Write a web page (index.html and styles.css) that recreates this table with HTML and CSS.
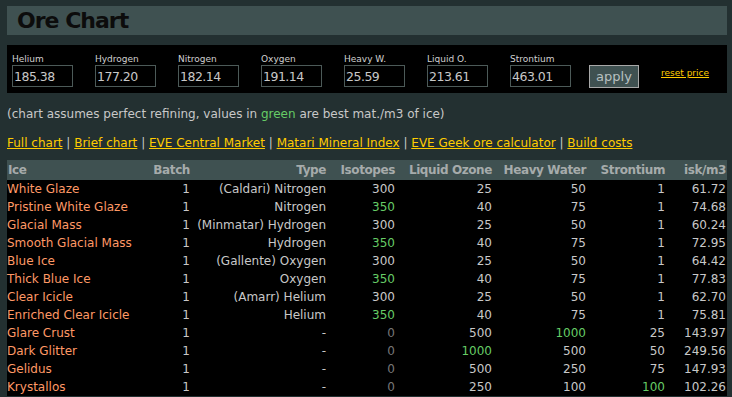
FILE: index.html
```html
<!DOCTYPE html>
<html>
<head>
<meta charset="utf-8">
<link rel="stylesheet" href="styles.css">
</head>
<body>
<div class="page">
  <h1 class="title">Ore Chart</h1>
  <form class="prices">
    <label class="field"><span class="lbl">Helium</span><input class="inp" value="185.38"></label>
    <label class="field"><span class="lbl">Hydrogen</span><input class="inp" value="177.20"></label>
    <label class="field"><span class="lbl">Nitrogen</span><input class="inp" value="182.14"></label>
    <label class="field"><span class="lbl">Oxygen</span><input class="inp" value="191.14"></label>
    <label class="field"><span class="lbl">Heavy W.</span><input class="inp" value="25.59"></label>
    <label class="field"><span class="lbl">Liquid O.</span><input class="inp" value="213.61"></label>
    <label class="field"><span class="lbl">Strontium</span><input class="inp" value="463.01"></label>
    <button type="button" class="apply">apply</button>
    <a class="reset" href="#">reset price</a>
  </form>
  <p class="note">(chart assumes perfect refining, values in <span class="g">green</span> are best mat./m3 of ice)</p>
  <p class="links"><a href="#">Full chart</a> | <a href="#">Brief chart</a> | <a href="#">EVE Central Market</a> | <a href="#">Matari Mineral Index</a> | <a href="#">EVE Geek ore calculator</a> | <a href="#">Build costs</a></p>
  <table class="chart">
    <colgroup>
      <col class="c-ice"><col class="c-batch"><col class="c-type"><col class="c-iso"><col class="c-lo"><col class="c-hw"><col class="c-sr"><col class="c-isk">
    </colgroup>
    <thead>
      <tr><th class="l">Ice</th><th>Batch</th><th>Type</th><th>Isotopes</th><th>Liquid Ozone</th><th>Heavy Water</th><th>Strontium</th><th class="last">isk/m3</th></tr>
    </thead>
    <tbody>
      <tr><td class="n">White Glaze</td><td>1</td><td>(Caldari) Nitrogen</td><td>300</td><td>25</td><td>50</td><td>1</td><td class="last">61.72</td></tr>
      <tr><td class="n">Pristine White Glaze</td><td>1</td><td>Nitrogen</td><td class="g">350</td><td>40</td><td>75</td><td>1</td><td class="last">74.68</td></tr>
      <tr><td class="n">Glacial Mass</td><td>1</td><td>(Minmatar) Hydrogen</td><td>300</td><td>25</td><td>50</td><td>1</td><td class="last">60.24</td></tr>
      <tr><td class="n">Smooth Glacial Mass</td><td>1</td><td>Hydrogen</td><td class="g">350</td><td>40</td><td>75</td><td>1</td><td class="last">72.95</td></tr>
      <tr><td class="n">Blue Ice</td><td>1</td><td>(Gallente) Oxygen</td><td>300</td><td>25</td><td>50</td><td>1</td><td class="last">64.42</td></tr>
      <tr><td class="n">Thick Blue Ice</td><td>1</td><td>Oxygen</td><td class="g">350</td><td>40</td><td>75</td><td>1</td><td class="last">77.83</td></tr>
      <tr><td class="n">Clear Icicle</td><td>1</td><td>(Amarr) Helium</td><td>300</td><td>25</td><td>50</td><td>1</td><td class="last">62.70</td></tr>
      <tr><td class="n">Enriched Clear Icicle</td><td>1</td><td>Helium</td><td class="g">350</td><td>40</td><td>75</td><td>1</td><td class="last">75.81</td></tr>
      <tr><td class="n">Glare Crust</td><td>1</td><td>-</td><td class="z">0</td><td>500</td><td class="g">1000</td><td>25</td><td class="last">143.97</td></tr>
      <tr><td class="n">Dark Glitter</td><td>1</td><td>-</td><td class="z">0</td><td class="g">1000</td><td>500</td><td>50</td><td class="last">249.56</td></tr>
      <tr><td class="n">Gelidus</td><td>1</td><td>-</td><td class="z">0</td><td>500</td><td>250</td><td>75</td><td class="last">147.93</td></tr>
      <tr><td class="n">Krystallos</td><td>1</td><td>-</td><td class="z">0</td><td>250</td><td>100</td><td class="g">100</td><td class="last">102.26</td></tr>
    </tbody>
  </table>
</div>
</body>
</html>
```

FILE: styles.css
```css
html, body {
  margin: 0;
  padding: 0;
  background: #233031;
}
body {
  font-family: "DejaVu Sans", sans-serif;
  color: #c8c8c8;
  font-size: 12px;
}
.page {
  padding: 6px 5px 0 7px;
  width: 720px;
}
.title {
  margin: 0;
  height: 29px;
  background: #3f5151;
  color: #0c0c0c;
  font-size: 22px;
  font-weight: bold;
  letter-spacing: -1px;
  line-height: 29px;
  padding-left: 10px;
}
.prices {
  margin: 10px 0 0 0;
  height: 48px;
  background: #000;
  display: flex;
  align-items: flex-start;
  padding: 0 0 0 5px;
}
.field {
  display: flex;
  flex-direction: column;
  width: 83px;
}
.lbl {
  font-size: 9px;
  color: #d0d0d0;
  height: 12px;
  line-height: 12px;
  margin-top: 8px;
}
.inp {
  width: 58px;
  height: 20px;
  margin: 0;
  padding: 0 0 0 1px;
  border: 1px solid #4c5a58;
  background: #000;
  color: #c8c8c8;
  font-family: "DejaVu Sans", sans-serif;
  font-size: 12.5px;
  letter-spacing: -0.5px;
  outline: none;
  box-sizing: content-box;
}
.apply {
  margin: 20px 0 0 -4px;
  width: 50px;
  height: 23px;
  background: #3f5151;
  border: 1px solid #a8a8a8;
  color: #b8c0c0;
  font-family: "DejaVu Sans", sans-serif;
  font-size: 13px;
  padding: 0;
}
.reset {
  margin: 23px 0 0 22px;
  font-size: 9px;
  color: #ffcc00;
}
.note {
  margin: 13px 0 0 0;
  line-height: 16px;
}
.g { color: #66cc66; }
.z { color: #777; }
.links {
  margin: 13px 0 0 0;
  line-height: 16px;
  color: #c8c8c8;
}
.links a { color: #ffcc00; }
.chart {
  margin-top: 9px;
  width: 720px;
  border-collapse: collapse;
  table-layout: fixed;
  background: #000;
}
.c-ice { width: 130px; }
.c-batch { width: 53px; }
.c-type { width: 136px; }
.c-iso { width: 69px; }
.c-lo { width: 97px; }
.c-hw { width: 94px; }
.c-sr { width: 79px; }
.c-isk { width: 62px; }
.chart th {
  background: #3f5151;
  color: #a6abab;
  font-weight: bold;
  text-align: right;
  height: 20px;
  padding: 0;
  letter-spacing: -0.4px;
  white-space: nowrap;
}
.chart th.l, .chart td.n { text-align: left; }
.chart th.l { padding-left: 1px; }
.chart td {
  height: 18px;
  padding: 0;
  text-align: right;
  line-height: 18px;
  white-space: nowrap;
  overflow: visible;
}
.chart .last { padding-right: 1px; }
.chart td.n { color: #ff9966; }
```
